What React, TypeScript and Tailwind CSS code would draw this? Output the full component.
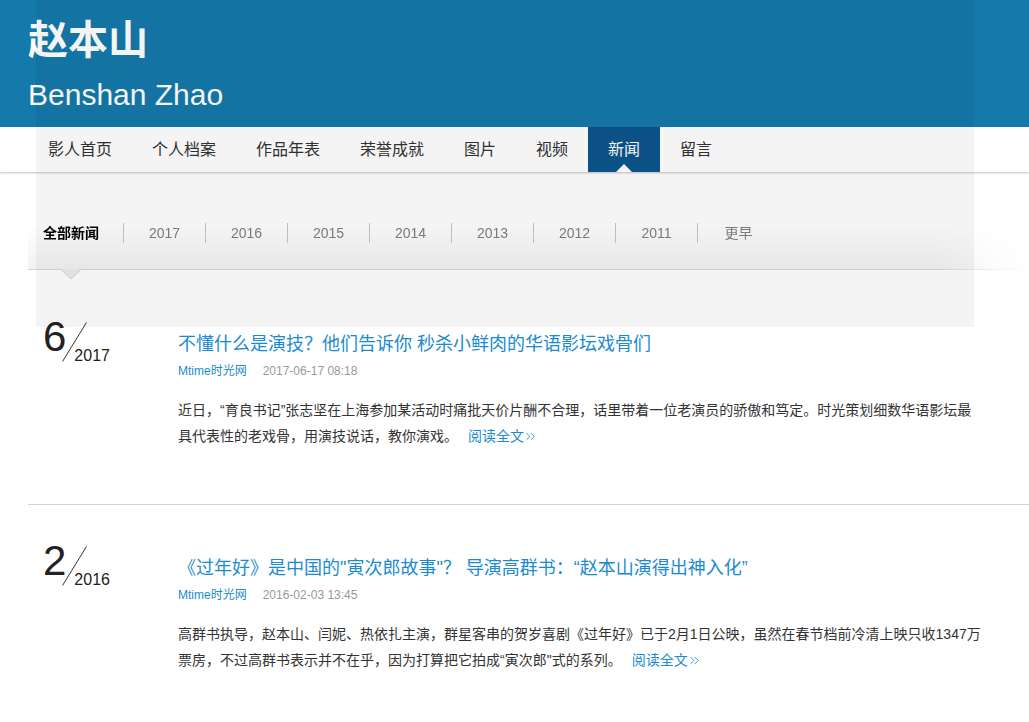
import { ChevronsRight } from "lucide-react";

const font = "font-['Liberation_Sans','Noto_Sans_CJK_SC',sans-serif]";

const navItems = ["影人首页", "个人档案", "作品年表", "荣誉成就", "图片", "视频", "新闻", "留言"];
const years = ["2017", "2016", "2015", "2014", "2013", "2012", "2011", "更早"];

interface NewsItem {
  month: string;
  year: string;
  title: string;
  source: string;
  time: string;
  body: string;
}

const news: NewsItem[] = [
  {
    month: "6",
    year: "2017",
    title: "不懂什么是演技？他们告诉你 秒杀小鲜肉的华语影坛戏骨们",
    source: "Mtime时光网",
    time: "2017-06-17 08:18",
    body: "近日，“育良书记”张志坚在上海参加某活动时痛批天价片酬不合理，话里带着一位老演员的骄傲和笃定。时光策划细数华语影坛最具代表性的老戏骨，用演技说话，教你演戏。",
  },
  {
    month: "2",
    year: "2016",
    title: "《过年好》是中国的\"寅次郎故事\"？ 导演高群书：“赵本山演得出神入化”",
    source: "Mtime时光网",
    time: "2016-02-03 13:45",
    body: "高群书执导，赵本山、闫妮、热依扎主演，群星客串的贺岁喜剧《过年好》已于2月1日公映，虽然在春节档前冷清上映只收1347万票房，不过高群书表示并不在乎，因为打算把它拍成“寅次郎\"式的系列。",
  },
];

const DateMark = ({ month, year }: { month: string; year: string }) => (
  <div className="flex items-start text-[#222]">
    <span className="text-[42px] leading-[42px]">{month}</span>
    <svg className="-ml-[4px] mt-[6px]" width="25" height="40" viewBox="0 0 25 40">
      <line x1="0.5" y1="39.5" x2="24.5" y2="0.5" stroke="#333" strokeWidth="1" />
    </svg>
    <span className="-ml-[13px] mt-[32px] text-[16px] leading-4">{year}</span>
  </div>
);

export default function App() {
  return (
    <div className={`relative min-h-[722px] bg-white ${font}`}>
      <header className="h-[127px] bg-[#1479ab] pl-7 pt-[15px] text-white">
        <h1 className="text-[40px] font-bold leading-[50px]">赵本山</h1>
        <p className="mt-[13px] text-[30px] leading-[34px]">Benshan Zhao</p>
      </header>

      <nav className="relative z-[1] flex h-[45px] bg-white pl-7 shadow-[0_1px_2px_rgba(0,0,0,0.25)]">
        {navItems.map((item) => (
          <a
            key={item}
            className={`relative flex items-center px-5 text-[16px] ${
              item === "新闻" ? "bg-[#0c558b] text-white" : "text-[#333]"
            }`}
          >
            {item}
            {item === "新闻" && (
              <span className="absolute bottom-0 left-1/2 -ml-2 border-x-8 border-b-8 border-x-transparent border-b-white" />
            )}
          </a>
        ))}
      </nav>

      <div className="relative ml-7">
        <div className="flex h-[98px] items-center border-b border-[#d6d6d6] bg-[linear-gradient(to_bottom,rgba(0,0,0,0)_55%,rgba(0,0,0,0.05))] pt-[25px] [mask-image:linear-gradient(to_right,black_90%,transparent)]">
          <span className="pl-[15px] pr-6 text-[14px] font-bold text-black">全部新闻</span>
          {years.map((y) => (
            <span key={y} className="flex h-5 w-[82px] items-center justify-center border-l border-[#c8c8c8] text-[14px] text-[#808080]">
              {y}
            </span>
          ))}
        </div>
        <svg className="absolute -bottom-[10px] left-[32px]" width="22" height="11" viewBox="0 0 22 11">
          <path d="M0 0 L11 10 L22 0 Z" fill="#ececec" />
          <path d="M0.5 0 L11 10 L21.5 0" fill="none" stroke="#d2d2d2" strokeWidth="1" />
        </svg>
      </div>

      <div className="ml-7 pt-[11px]">
        {news.map((n, i) => (
          <article
            key={n.title}
            className={`flex pt-[35px] ${i === 0 ? "border-b border-[#d4d4d4] pb-[55px]" : "pb-[57px]"}`}
          >
            <div className="w-[150px] pl-[15px]">
              <DateMark month={n.month} year={n.year} />
            </div>
            <div className="w-[805px]">
              <h2 className="mt-[14px] text-[18px] leading-7 text-[#1a8bd0]">{n.title}</h2>
              <div className="mt-[4px] flex text-[12px] leading-[18px]">
                <span className="text-[#1a8bd0]">{n.source}</span>
                <span className="ml-4 text-[#999]">{n.time}</span>
              </div>
              <p className="mt-[17px] text-[14px] leading-[26px] text-[#333]">
                {n.body}
                <a className="ml-[10px] inline-flex items-center text-[#1a8bd0]">
                  阅读全文
                  <ChevronsRight size={15} strokeWidth={1.4} className="-ml-px" />
                </a>
              </p>
            </div>
          </article>
        ))}
      </div>

      <div className="pointer-events-none absolute left-[36px] top-0 z-[2] h-[327px] w-[938px] bg-black/[0.045]" />
    </div>
  );
}
